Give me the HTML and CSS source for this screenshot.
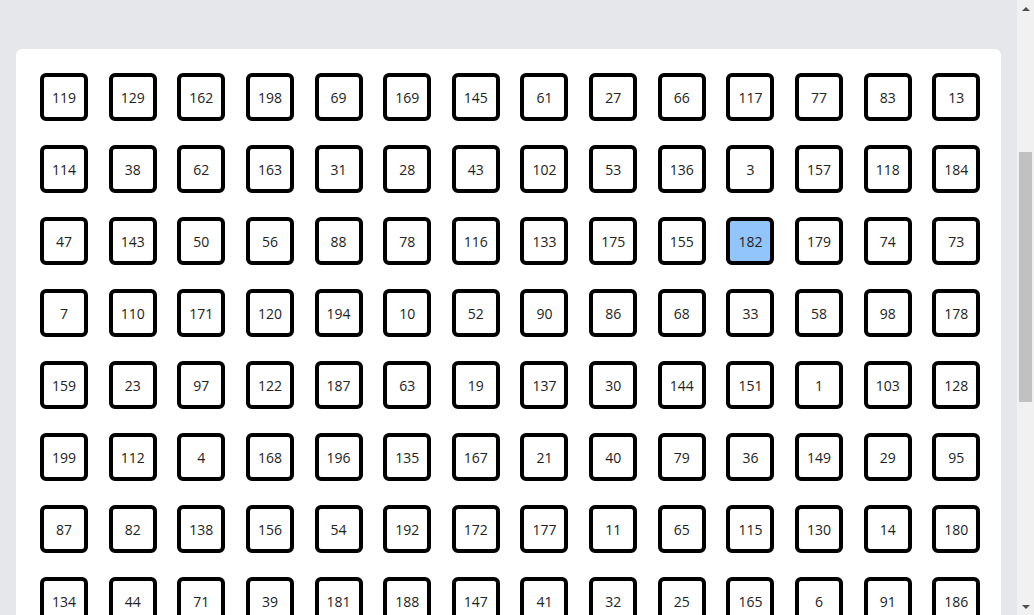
FILE: index.html
```html
<!DOCTYPE html>
<html lang="en">
<head>
<meta charset="utf-8">
<title>Grid</title>
<link rel="stylesheet" href="styles.css">
</head>
<body>
<main class="page">
  <section class="card">
    <div class="grid" id="grid"></div>
  </section>
</main>
<div class="scrollbar" aria-hidden="true">
  <span class="arrow up"></span>
  <div class="track"><span class="thumb"></span></div>
  <span class="arrow down"></span>
</div>
<script src="script.js"></script>
</body>
</html>
```
FILE: styles.css
```css
html, body {
  margin: 0;
  padding: 0;
}
body {
  background: #e5e7eb;
  font-family: "Open Sans", "Noto Sans", "Liberation Sans", sans-serif;
  color: #222;
  overflow: hidden;
}
.page {
  padding: 49px 33px 16px 16px;
}
.card {
  background: #fff;
  border-radius: 6px;
  padding: 24px;
}
.grid {
  display: grid;
  grid-template-columns: repeat(14, minmax(0, 1fr));
  gap: 24px;
}
.cell {
  box-sizing: border-box;
  width: 48px;
  height: 48px;
  border: 4px solid #000;
  border-radius: 6px;
  background: #fff;
  display: flex;
  align-items: center;
  justify-content: center;
  font-size: 14px;
  color: #222;
}
.cell.active {
  background: #93c5fd;
}
.scrollbar {
  position: fixed;
  top: 0;
  right: 0;
  width: 17px;
  height: 100vh;
  background: #f1f1f1;
  display: flex;
  flex-direction: column;
}
.arrow {
  height: 17px;
  display: flex;
  align-items: center;
  justify-content: center;
}
.arrow::before {
  content: "";
  width: 0;
  height: 0;
  border-left: 4px solid transparent;
  border-right: 4px solid transparent;
}
.arrow.up::before {
  border-bottom: 4px solid #505050;
}
.arrow.down::before {
  border-top: 4px solid #505050;
}
.track {
  flex: 1;
  padding-top: 135px;
}
.thumb {
  display: block;
  margin: 0 2px;
  height: 250px;
  background: #c1c1c1;
}
```
FILE: script.js
```js
var nums = [
119,129,162,198,69,169,145,61,27,66,117,77,83,13,
114,38,62,163,31,28,43,102,53,136,3,157,118,184,
47,143,50,56,88,78,116,133,175,155,182,179,74,73,
7,110,171,120,194,10,52,90,86,68,33,58,98,178,
159,23,97,122,187,63,19,137,30,144,151,1,103,128,
199,112,4,168,196,135,167,21,40,79,36,149,29,95,
87,82,138,156,54,192,172,177,11,65,115,130,14,180,
134,44,71,39,181,188,147,41,32,25,165,6,91,186
];
var grid = document.getElementById('grid');
nums.forEach(function (n) {
  var d = document.createElement('div');
  d.className = 'cell' + (n === 182 ? ' active' : '');
  d.textContent = n;
  grid.appendChild(d);
});
```
